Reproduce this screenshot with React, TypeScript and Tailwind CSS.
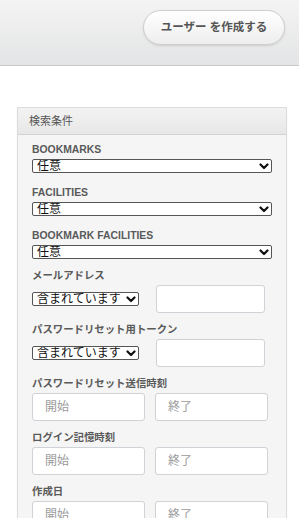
import React from 'react';

const FONT = "font-['Liberation_Sans','Noto_Sans_CJK_JP',sans-serif]";

const Chevron = () => (
  <svg width="10" height="7" viewBox="0 0 10 7" className="shrink-0">
    <polyline points="1.5,1.5 5,5 8.5,1.5" fill="none" stroke="#111" strokeWidth="2.2" strokeLinecap="round" strokeLinejoin="round" />
  </svg>
);

const Select = ({ value, className }: { value: string; className: string }) => (
  <div
    role="combobox"
    className={`flex items-center justify-between overflow-hidden rounded-[2px] border border-[#555] bg-white pl-[4px] pr-[2px] text-[12px] leading-[13px] text-[#111] ${className}`}
  >
    <span>{value}</span>
    <Chevron />
  </div>
);

const Label = ({ children }: { children: React.ReactNode }) => (
  <div className="mb-[2px] text-[10.4px] font-bold leading-[14px] text-[#5a5a5a]">{children}</div>
);

const TextInput = ({ placeholder, className }: { placeholder?: string; className: string }) => (
  <input
    placeholder={placeholder}
    className={`rounded-[3px] border border-[#cfd2d6] bg-white pl-[12px] text-[12px] text-[#333] outline-none placeholder:text-[#9a9a9a] ${className}`}
  />
);

const RangeRow = () => (
  <div className="flex gap-[10px]">
    <TextInput placeholder="開始" className="h-[28px] w-[113px]" />
    <TextInput placeholder="終了" className="h-[28px] w-[113px]" />
  </div>
);

const MatchRow = () => (
  <div className="flex items-center">
    <Select value="含まれています" className="h-[14px] w-[107px]" />
    <TextInput className="ml-[17px] h-[28px] w-[109px]" />
  </div>
);

export default function App() {
  return (
    <div className={`h-[518px] w-[299px] overflow-hidden bg-white ${FONT}`}>
      <div className="flex h-[66px] justify-end border-b border-[#c9c9c9] bg-gradient-to-b from-[#f4f4f4] to-[#e3e4e5] pr-[14px] pt-[10px]">
        <button className="h-[35px] w-[142px] rounded-full border border-[#cdcdcd] bg-gradient-to-b from-white to-[#eeeeee] text-[11.5px] font-bold text-[#555] shadow-[0_1px_2px_rgba(0,0,0,0.12)]">
          ユーザー を作成する
        </button>
      </div>

      <div className="ml-[17px] mt-[41px] w-[270px] border border-[#dcdcdc] bg-[#f5f5f5] shadow-[0_1px_2px_rgba(0,0,0,0.06)]">
        <div className="flex h-[27px] items-center border-b border-[#d3d3d3] bg-gradient-to-b from-[#f3f3f3] to-[#e7e7e7] pl-[11px] text-[11px] text-[#555]">
          検索条件
        </div>
        <div className="flex flex-col px-[14px] pb-[20px] pt-[8px]">
          <div>
            <Label>BOOKMARKS</Label>
            <Select value="任意" className="h-[14px] w-[240px]" />
          </div>
          <div className="mt-[13px]">
            <Label>FACILITIES</Label>
            <Select value="任意" className="h-[14px] w-[240px]" />
          </div>
          <div className="mt-[13px]">
            <Label>BOOKMARK FACILITIES</Label>
            <Select value="任意" className="h-[14px] w-[240px]" />
          </div>
          <div className="mt-[10px]">
            <Label>メールアドレス</Label>
            <MatchRow />
          </div>
          <div className="mt-[10px]">
            <Label>パスワードリセット用トークン</Label>
            <MatchRow />
          </div>
          <div className="mt-[10px]">
            <Label>パスワードリセット送信時刻</Label>
            <RangeRow />
          </div>
          <div className="mt-[10px]">
            <Label>ログイン記憶時刻</Label>
            <RangeRow />
          </div>
          <div className="mt-[10px]">
            <Label>作成日</Label>
            <RangeRow />
          </div>
        </div>
      </div>
    </div>
  );
}
